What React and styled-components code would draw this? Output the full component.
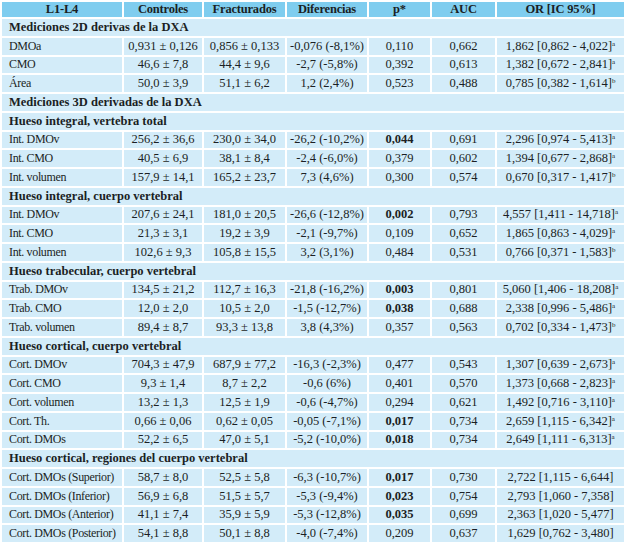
import React from "react";
import styled, { createGlobalStyle } from "styled-components";

const GlobalStyle = createGlobalStyle`
  html, body {
    margin: 0;
    padding: 0;
    background: #ffffff;
  }
`;

const Table = styled.table`
  width: 624px;
  height: 544px;
  table-layout: fixed;
  border-collapse: collapse;
  font-family: "Liberation Serif", "DejaVu Serif", serif;
  font-size: 12.5px;
  color: #1b1f24;
`;

const HeadCell = styled.th`
  background: #7fcdef;
  border: 2px solid #ffffff;
  font-weight: bold;
  text-align: center;
  padding: 0 4px;
  letter-spacing: -0.2px;
  white-space: nowrap;
`;

const SectionCell = styled.td`
  background: #d3ecf9;
  border: 2px solid #ffffff;
  font-weight: bold;
  text-align: left;
  padding: 0 7px;
  white-space: nowrap;
`;

const Cell = styled.td`
  background: #d3ecf9;
  border: 2px solid #ffffff;
  text-align: center;
  font-weight: ${p => (p.$bold ? "bold" : "normal")};
  padding: 0 2px;
  white-space: nowrap;
`;

const LabelCell = styled(Cell)`
  text-align: left;
  padding: 0 7px;
  font-size: 12px;
  letter-spacing: -0.35px;
`;

const Mark = styled.sup`
  font-size: 7px;
  line-height: 0;
  vertical-align: 4px;
`;

const widths = [122, 80, 83, 82, 63, 65, 129];
const headers = ["L1-L4", "Controles", "Fracturados", "Diferencias", "p*", "AUC", "OR [IC 95%]"];

// [label, controles, fracturados, diferencias, p, bold p, auc, or, mark]
const rows = [
  ["section", "Mediciones 2D derivas de la DXA"],
  ["DMOa", "0,931 ± 0,126", "0,856 ± 0,133", "-0,076 (-8,1%)", "0,110", false, "0,662", "1,862 [0,862 - 4,022]", "a"],
  ["CMO", "46,6 ± 7,8", "44,4 ± 9,6", "-2,7 (-5,8%)", "0,392", false, "0,613", "1,382 [0,672 - 2,841]", "a"],
  ["Área", "50,0 ± 3,9", "51,1 ± 6,2", "1,2 (2,4%)", "0,523", false, "0,488", "0,785 [0,382 - 1,614]", "b"],
  ["section", "Mediciones 3D derivadas de la DXA"],
  ["section", "Hueso integral, vertebra total"],
  ["Int. DMOv", "256,2 ± 36,6", "230,0 ± 34,0", "-26,2 (-10,2%)", "0,044", true, "0,691", "2,296 [0,974 - 5,413]", "a"],
  ["Int. CMO", "40,5 ± 6,9", "38,1 ± 8,4", "-2,4 (-6,0%)", "0,379", false, "0,602", "1,394 [0,677 - 2,868]", "a"],
  ["Int. volumen", "157,9 ± 14,1", "165,2 ± 23,7", "7,3 (4,6%)", "0,300", false, "0,574", "0,670 [0,317 - 1,417]", "b"],
  ["section", "Hueso integral, cuerpo vertebral"],
  ["Int. DMOv", "207,6 ± 24,1", "181,0 ± 20,5", "-26,6 (-12,8%)", "0,002", true, "0,793", "4,557 [1,411 - 14,718]", "a"],
  ["Int. CMO", "21,3 ± 3,1", "19,2 ± 3,9", "-2,1 (-9,7%)", "0,109", false, "0,652", "1,865 [0,863 - 4,029]", "a"],
  ["Int. volumen", "102,6 ± 9,3", "105,8 ± 15,5", "3,2 (3,1%)", "0,484", false, "0,531", "0,766 [0,371 - 1,583]", "b"],
  ["section", "Hueso trabecular, cuerpo vertebral"],
  ["Trab. DMOv", "134,5 ± 21,2", "112,7 ± 16,3", "-21,8 (-16,2%)", "0,003", true, "0,801", "5,060 [1,406 - 18,208]", "a"],
  ["Trab. CMO", "12,0 ± 2,0", "10,5 ± 2,0", "-1,5 (-12,7%)", "0,038", true, "0,688", "2,338 [0,996 - 5,486]", "a"],
  ["Trab. volumen", "89,4 ± 8,7", "93,3 ± 13,8", "3,8 (4,3%)", "0,357", false, "0,563", "0,702 [0,334 - 1,473]", "b"],
  ["section", "Hueso cortical, cuerpo vertebral"],
  ["Cort. DMOv", "704,3 ± 47,9", "687,9 ± 77,2", "-16,3 (-2,3%)", "0,477", false, "0,543", "1,307 [0,639 - 2,673]", "a"],
  ["Cort. CMO", "9,3 ± 1,4", "8,7 ± 2,2", "-0,6 (6%)", "0,401", false, "0,570", "1,373 [0,668 - 2,823]", "a"],
  ["Cort. volumen", "13,2 ± 1,3", "12,5 ± 1,9", "-0,6 (-4,7%)", "0,294", false, "0,621", "1,492 [0,716 - 3,110]", "a"],
  ["Cort. Th.", "0,66 ± 0,06", "0,62 ± 0,05", "-0,05 (-7,1%)", "0,017", true, "0,734", "2,659 [1,115 - 6,342]", "a"],
  ["Cort. DMOs", "52,2 ± 6,5", "47,0 ± 5,1", "-5,2 (-10,0%)", "0,018", true, "0,734", "2,649 [1,111 - 6,313]", "a"],
  ["section", "Hueso cortical, regiones del cuerpo vertebral"],
  ["Cort. DMOs (Superior)", "58,7 ± 8,0", "52,5 ± 5,8", "-6,3 (-10,7%)", "0,017", true, "0,730", "2,722 [1,115 - 6,644]", ""],
  ["Cort. DMOs (Inferior)", "56,9 ± 6,8", "51,5 ± 5,7", "-5,3 (-9,4%)", "0,023", true, "0,754", "2,793 [1,060 - 7,358]", ""],
  ["Cort. DMOs (Anterior)", "41,1 ± 7,4", "35,9 ± 5,9", "-5,3 (-12,8%)", "0,035", true, "0,699", "2,363 [1,020 - 5,477]", ""],
  ["Cort. DMOs (Posterior)", "54,1 ± 8,8", "50,1 ± 8,8", "-4,0 (-7,4%)", "0,209", false, "0,637", "1,629 [0,762 - 3,480]", ""]
];

export default function App() {
  return (
    <>
      <GlobalStyle />
      <Table>
        <colgroup>
          {widths.map((w, i) => (
            <col key={i} style={{ width: w }} />
          ))}
        </colgroup>
        <thead>
          <tr>
            {headers.map(h => (
              <HeadCell key={h}>{h}</HeadCell>
            ))}
          </tr>
        </thead>
        <tbody>
          {rows.map((r, i) =>
            r[0] === "section" ? (
              <tr key={i}>
                <SectionCell colSpan={7}>{r[1]}</SectionCell>
              </tr>
            ) : (
              <tr key={i}>
                <LabelCell>{r[0]}</LabelCell>
                <Cell>{r[1]}</Cell>
                <Cell>{r[2]}</Cell>
                <Cell>{r[3]}</Cell>
                <Cell $bold={r[5]}>{r[4]}</Cell>
                <Cell>{r[6]}</Cell>
                <Cell>
                  {r[7]}
                  {r[8] && <Mark>{r[8]}</Mark>}
                </Cell>
              </tr>
            )
          )}
        </tbody>
      </Table>
    </>
  );
}
